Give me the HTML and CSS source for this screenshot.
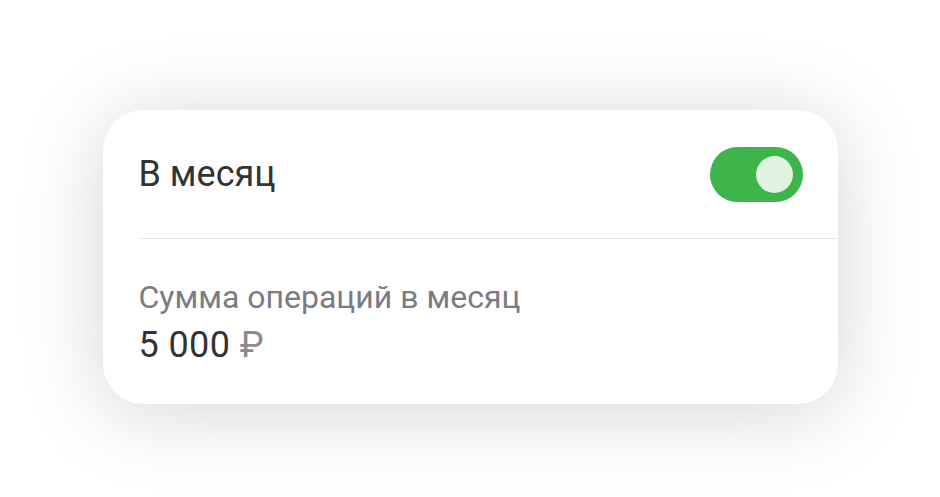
FILE: index.html
```html
<!DOCTYPE html>
<html lang="ru">
<head>
    <meta charset="UTF-8">
    <title>В месяц</title>
    <link rel="stylesheet" href="styles.css">
</head>
<body>
    <div class="card">
        <div class="row">
            <span class="title">В месяц</span>
            <div class="toggle on">
                <div class="knob"></div>
            </div>
        </div>
        <div class="info">
            <div class="label">Сумма операций в месяц</div>
            <div class="value">5&nbsp;000 <span class="currency">₽</span></div>
        </div>
    </div>
</body>
</html>
```

FILE: styles.css
```css
body {
    margin: 0;
    min-height: 100vh;
    box-sizing: border-box;
    background: #fff;
    font-family: Roboto, "Noto Sans", sans-serif;
    display: flex;
    justify-content: center;
    align-items: flex-start;
    padding-top: 110px;
}
.card {
    width: 735px;
    height: 294px;
    box-sizing: border-box;
    background: #fff;
    border-radius: 40px;
    box-shadow: 0 8px 84px rgba(0, 0, 0, 0.17);
    padding-left: 36px;
}
.row {
    display: flex;
    align-items: center;
    justify-content: space-between;
    height: 128px;
    padding-right: 35px;
    border-bottom: 1px solid #e6e6e6;
}
.title {
    font-size: 36px;
    color: #333;
}
.toggle {
    width: 93px;
    height: 55px;
    border-radius: 28px;
    background: #3db54a;
    display: flex;
    align-items: center;
    justify-content: flex-end;
    padding-right: 10px;
    box-sizing: border-box;
}
.knob {
    width: 37px;
    height: 37px;
    border-radius: 50%;
    background: #e0f3e0;
}
.info {
    padding-top: 39px;
}
.label {
    font-size: 32px;
    color: #7b7b82;
}
.value {
    margin-top: 8px;
    font-size: 36px;
    letter-spacing: 0.4px;
    color: #333;
}
.currency {
    color: #8a8a90;
}
```
